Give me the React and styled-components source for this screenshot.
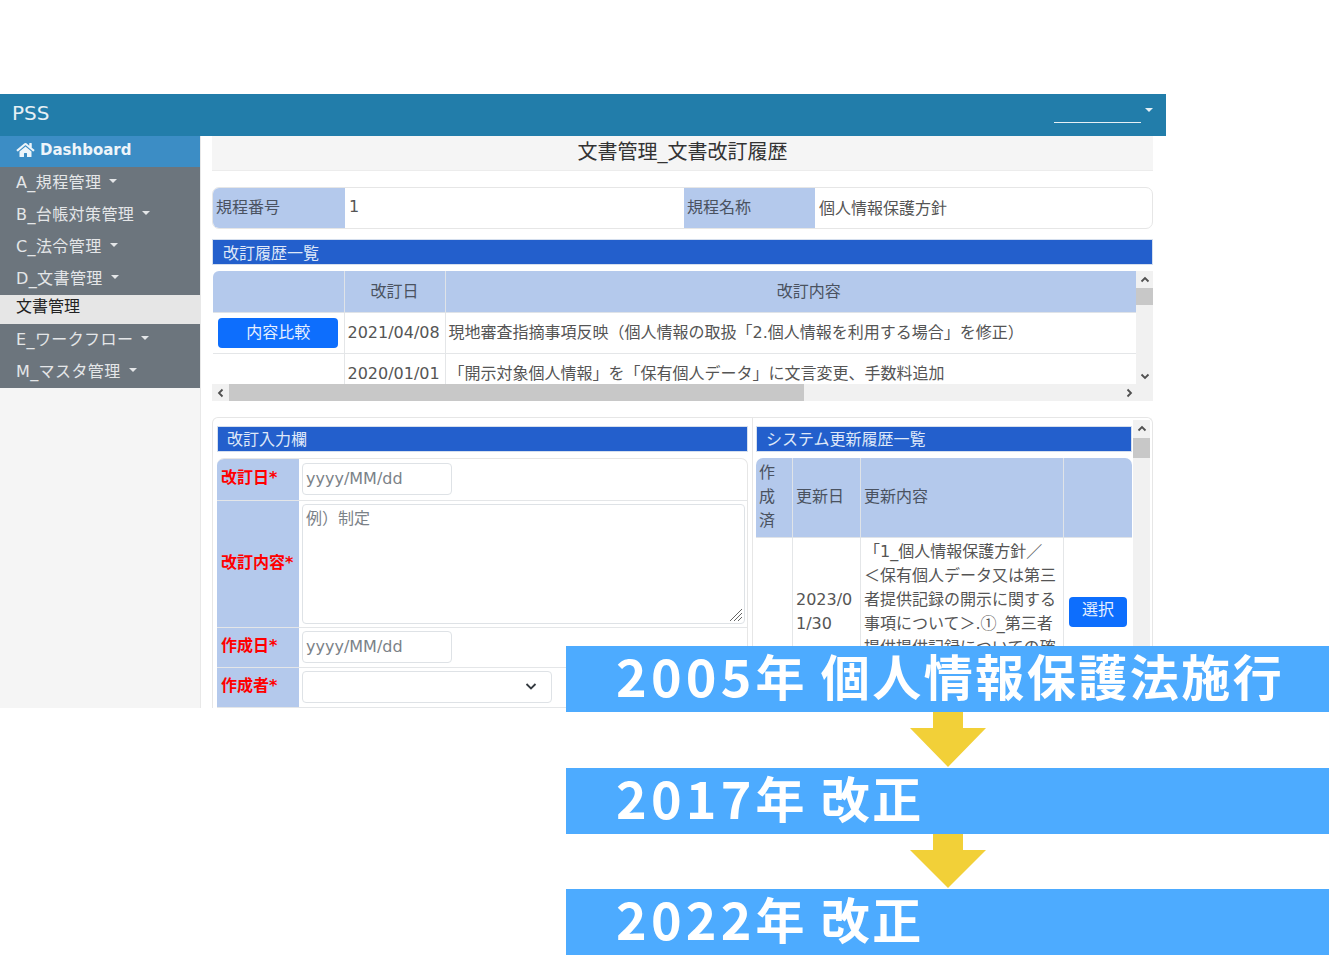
import React from "react";
import styled, { createGlobalStyle } from "styled-components";
import { FaHome } from "react-icons/fa";

const Global = createGlobalStyle`
  html, body { margin: 0; padding: 0; background: #fff; }
  body { font-family: "DejaVu Sans", "Noto Sans CJK JP", sans-serif; color: #555; font-size: 16px; }
  * { box-sizing: border-box; }
`;

const Slide = styled.div`
  position: relative;
  width: 1330px;
  height: 956px;
  padding-top: 94px;
  overflow: hidden;
  background: #fff;
`;
const AppWindow = styled.div`
  width: 1166px;
  height: 614px;
  overflow: hidden;
  display: flex;
  flex-direction: column;
`;
const Navbar = styled.header`
  flex: none;
  height: 42px;
  background: #227daa;
  display: flex;
  align-items: center;
  justify-content: space-between;
  padding: 0 13px 0 12px;
  color: #e6f0f5;
`;
const Brand = styled.span`
  font-size: 20px;
  padding-bottom: 4px;
`;
const UserMenu = styled.div`
  display: flex;
  align-items: flex-start;
  gap: 4px;
`;
const UserName = styled.span`
  width: 87px;
  height: 14px;
  margin-top: 1px;
  border-bottom: 1px solid #e6f0f5;
`;
const Caret = styled.i`
  display: inline-block;
  width: 0;
  height: 0;
  border-top: 4px solid currentColor;
  border-left: 4px solid transparent;
  border-right: 4px solid transparent;
`;
const Body = styled.div`
  flex: 1;
  display: flex;
  min-height: 0;
`;
const Sidebar = styled.nav`
  flex: none;
  width: 201px;
  background: #f5f5f5;
  border-right: 1px solid #e8e8e8;
`;
const DashItem = styled.div`
  height: 31px;
  background: #3c8dc5;
  color: #eef5fa;
  font-size: 15px;
  font-weight: 700;
  display: flex;
  align-items: center;
  gap: 5px;
  padding: 0 0 3px 16px;
  svg { width: 19px; height: 16px; }
`;
const NavItem = styled.div`
  height: 32px;
  background: #6c757d;
  color: #e4e6e8;
  display: flex;
  align-items: center;
  gap: 8px;
  padding: 0 0 4px 16px;
  letter-spacing: 0.4px;
`;
const NavSub = styled.div`
  height: 29px;
  background: #e6e6e6;
  color: #222;
  display: flex;
  align-items: center;
  padding: 0 0 9px 16px;
`;
const Main = styled.main`
  flex: none;
  width: 952px;
  margin-left: 11px;
  min-height: 0;
`;
const Title = styled.h1`
  margin: 0;
  height: 35px;
  background: #f5f5f5;
  border-bottom: 1px solid #ececec;
  font-size: 20px;
  font-weight: 400;
  line-height: 33px;
  color: #333;
  text-align: center;
  width: 941px;
`;
const Content = styled.div`
  width: 941px;
`;
const InfoGrid = styled.div`
  margin-top: 16px;
  height: 42px;
  display: grid;
  grid-template-columns: 132px 339px 131px 1fr;
  border: 1px solid #e6e6e6;
  border-radius: 7px;
  overflow: hidden;
`;
const InfoLabel = styled.div`
  background: #b4c9ec;
  display: flex;
  align-items: center;
  padding: 0 0 4px 3px;
  color: #4a5260;
`;
const InfoValue = styled.div`
  display: flex;
  align-items: center;
  padding: 0 0 3px 4px;
  color: #555;
`;
const SectionBar = styled.h2`
  margin: ${(p) => p.$mt || 0}px 0 0;
  height: 26px;
  background: #235fcc;
  border: 1px solid #d5dfee;
  color: #dfe8f8;
  font-size: 16px;
  font-weight: 400;
  line-height: ${(p) => p.$lh || 25}px;
  padding-left: ${(p) => p.$pl || 9}px;
`;
const TableFrame = styled.div`
  margin-top: 6px;
  display: grid;
  grid-template-columns: 924px 17px;
  grid-template-rows: 113px 17px;
`;
const TableClip = styled.div`
  overflow: hidden;
  height: 113px;
`;
const HistoryTable = styled.table`
  width: 959px;
  margin-left: 1px;
  table-layout: fixed;
  border-collapse: collapse;
`;
const HeadCell = styled.th`
  height: 41px;
  background: #b4c9ec;
  font-weight: 400;
  border: 1px solid #dfe3e8;
  border-top: 0;
  color: #4a5260;
  padding: 0 0 2px;
  &:first-child { border-left: 0; border-top-left-radius: 6px; }
  &:last-child { border-right: 0; }
`;
const Cell = styled.td`
  height: 41px;
  border: 1px solid #e4e6e8;
  padding: 0 3px ${(p) => p.$pb || 0}px;
  white-space: nowrap;
  color: #555;
  vertical-align: middle;
  &:first-child { border-left: 0; }
  &:last-child { border-right: 0; }
`;
const PrimaryButton = styled.button`
  height: ${(p) => p.$h}px;
  width: ${(p) => p.$w}px;
  background: #0d6efd;
  color: #e6f0ff;
  border: 0;
  border-radius: 4px;
  font: inherit;
  padding: 0 0 4px;
  display: block;
  margin: 0 auto;
`;
const VTrack = styled.div`
  background: #f1f1f1;
  width: 17px;
  display: flex;
  flex-direction: column;
  height: ${(p) => (p.$fill ? "300px" : "auto")};
`;
const HTrack = styled.div`
  grid-column: 1 / span 2;
  background: #f1f1f1;
  display: flex;
`;
const ArrowBox = styled.div`
  flex: none;
  width: ${(p) => p.$w}px;
  height: ${(p) => p.$h}px;
  display: flex;
  align-items: center;
  justify-content: center;
  color: #505050;
`;
const VThumb = styled.div`
  flex: none;
  height: ${(p) => p.$h}px;
  background: #c8c8c8;
`;
const HThumb = styled.div`
  flex: none;
  width: ${(p) => p.$w}px;
  background: #c8c8c8;
`;
const Spacer = styled.div`
  flex: 1;
`;
const Chevron = ({ dir }) => {
  const d = {
    up: "M1.5 6.5 5 3l3.5 3.5",
    down: "M1.5 3.5 5 7l3.5-3.5",
    left: "M6.5 1.5 3 5l3.5 3.5",
    right: "M3.5 1.5 7 5 3.5 8.5",
  }[dir];
  return (
    <svg width="10" height="10" viewBox="0 0 10 10">
      <path d={d} fill="none" stroke="currentColor" strokeWidth="1.8" />
    </svg>
  );
};
const LowerPanel = styled.section`
  margin-top: 16px;
  height: 300px;
  border: 1px solid #e6e6e6;
  border-bottom: 0;
  border-radius: 6px 6px 0 0;
  display: flex;
`;
const LeftCol = styled.div`
  flex: none;
  width: 540px;
  padding: 8px 4px 0 4px;
  border-right: 1px solid #e6e6e6;
`;
const RightCol = styled.div`
  flex: none;
  width: 396px;
  padding: 2px 0 0 3px;
  display: flex;
  gap: 1px;
  align-items: flex-start;
`;
const RightInner = styled.div`
  width: 376px;
  flex: none;
  padding-top: 6px;
`;
const Form = styled.div`
  margin-top: 6px;
  border: 1px solid #e6e6e6;
  border-width: 1px 1px 0 0;
  border-radius: 7px 7px 0 0;
  overflow: hidden;
`;
const FormRow = styled.div`
  display: grid;
  grid-template-columns: 82px 1fr;
  height: ${(p) => p.$h}px;
  border-bottom: 1px solid #e4e6e8;
`;
const FormLabel = styled.label`
  background: #b4c9ec;
  color: #f00;
  font-weight: 700;
  display: flex;
  align-items: center;
  padding: 0 0 7px 4px;
  white-space: nowrap;
`;
const FormField = styled.div`
  padding: ${(p) => p.$pt || 4}px 3px 0;
`;
const DateInput = styled.input`
  width: 150px;
  height: 32px;
  border: 1px solid #dee2e6;
  border-radius: 4px;
  padding: 0 3px 2px;
  font: inherit;
  color: #555;
  background: #fff;
  &::placeholder { color: #7b8288; opacity: 1; }
`;
const TextAreaWrap = styled.div`
  position: relative;
  width: 443px;
  height: 120px;
`;
const TextArea = styled.textarea`
  display: block;
  width: 100%;
  height: 100%;
  border: 1px solid #dee2e6;
  border-radius: 4px;
  padding: 0 3px;
  font: inherit;
  resize: none;
  &::placeholder { color: #7b8288; opacity: 1; }
`;
const ResizeGrip = styled.svg`
  position: absolute;
  right: 2px;
  bottom: 2px;
  pointer-events: none;
`;
const SelectWrap = styled.div`
  position: relative;
  width: 250px;
  height: 32px;
`;
const Select = styled.select`
  appearance: none;
  width: 100%;
  height: 100%;
  border: 1px solid #dee2e6;
  border-radius: 4px;
  background: #fff;
  font: inherit;
`;
const SelectIcon = styled.svg`
  position: absolute;
  right: 15px;
  top: 11px;
  pointer-events: none;
`;
const UpdateTable = styled.table`
  margin-top: 6px;
  width: 376px;
  table-layout: fixed;
  border-collapse: separate;
  border-spacing: 0;
`;
const UHead = styled.th`
  height: 80px;
  background: #b4c9ec;
  border-right: 1px solid #dfe3e8;
  border-bottom: 1px solid #dfe3e8;
  font-weight: 400;
  color: #4a5260;
  text-align: left;
  padding: 0 3px 2px;
  line-height: 24px;
  &:first-child { border-top-left-radius: 7px; }
  &:last-child { border-top-right-radius: 7px; border-right: 0; }
`;
const UCell = styled.td`
  border-right: 1px solid #e4e6e8;
  padding: 2px 3px 1px;
  line-height: 24px;
  color: #555;
  word-break: break-all;
  vertical-align: middle;
  &:last-child { border-right: 0; }
`;
const Circled = styled.span`
  font-family: "Noto Sans CJK JP", sans-serif;
  line-height: 1;
`;
const Overlay = styled.div`
  position: absolute;
  left: 566px;
  top: 646px;
  width: 763px;
  display: flex;
  flex-direction: column;
`;
const YearBar = styled.div`
  height: 66px;
  background: #4dabff;
  color: #fff;
  display: flex;
  align-items: center;
  padding: 0 0 10px 50px;
  font-family: "Noto Sans CJK JP", sans-serif;
  font-size: 49px;
  font-weight: 700;
  letter-spacing: 2.5px;
  white-space: pre;
`;
const Digits = styled.span`
  font-size: 52px;
  letter-spacing: 4.2px;
`;
const ArrowSvg = styled.svg`
  display: block;
  margin-left: 344px;
`;
const DownArrow = ({ h }) => (
  <ArrowSvg width="76" height={h} viewBox={`0 0 76 ${h}`}>
    <path d={`M23 0h30v16h23L38 ${h - 1} 0 16h23z`} fill="#f2d038" />
  </ArrowSvg>
);

export default function App() {
  return (
    <Slide>
      <Global />
      <AppWindow>
        <Navbar>
          <Brand>PSS</Brand>
          <UserMenu>
            <UserName />
            <Caret />
          </UserMenu>
        </Navbar>
        <Body>
          <Sidebar>
            <DashItem>
              <FaHome />
              Dashboard
            </DashItem>
            <NavItem>A_規程管理<Caret /></NavItem>
            <NavItem>B_台帳対策管理<Caret /></NavItem>
            <NavItem>C_法令管理<Caret /></NavItem>
            <NavItem>D_文書管理<Caret /></NavItem>
            <NavSub>文書管理</NavSub>
            <NavItem>E_ワークフロー<Caret /></NavItem>
            <NavItem>M_マスタ管理<Caret /></NavItem>
          </Sidebar>
          <Main>
            <Content>
              <Title>文書管理_文書改訂履歴</Title>
              <InfoGrid>
                <InfoLabel>規程番号</InfoLabel>
                <InfoValue>1</InfoValue>
                <InfoLabel>規程名称</InfoLabel>
                <InfoValue>個人情報保護方針</InfoValue>
              </InfoGrid>
              <SectionBar $mt={10} $lh={27} $pl={10}>改訂履歴一覧</SectionBar>
              <TableFrame>
                <TableClip>
                  <HistoryTable>
                    <colgroup>
                      <col width="131" />
                      <col width="101" />
                      <col />
                    </colgroup>
                    <thead>
                      <tr>
                        <HeadCell />
                        <HeadCell>改訂日</HeadCell>
                        <HeadCell>改訂内容</HeadCell>
                      </tr>
                    </thead>
                    <tbody>
                      <tr>
                        <Cell><PrimaryButton $w={120} $h={30}>内容比較</PrimaryButton></Cell>
                        <Cell>2021/04/08</Cell>
                        <Cell $pb={4}>現地審査指摘事項反映（個人情報の取扱「2.個人情報を利用する場合」を修正）</Cell>
                      </tr>
                      <tr>
                        <Cell />
                        <Cell>2020/01/01</Cell>
                        <Cell $pb={4}>「開示対象個人情報」を「保有個人データ」に文言変更、手数料追加</Cell>
                      </tr>
                    </tbody>
                  </HistoryTable>
                </TableClip>
                <VTrack>
                  <ArrowBox $w={17} $h={17}><Chevron dir="up" /></ArrowBox>
                  <VThumb $h={17} />
                  <Spacer />
                  <ArrowBox $w={17} $h={17}><Chevron dir="down" /></ArrowBox>
                </VTrack>
                <HTrack>
                  <ArrowBox $w={17} $h={17}><Chevron dir="left" /></ArrowBox>
                  <HThumb $w={575} />
                  <Spacer />
                  <ArrowBox $w={17} $h={17}><Chevron dir="right" /></ArrowBox>
                  <ArrowBox $w={16} $h={17} />
                </HTrack>
              </TableFrame>
              <LowerPanel>
                <LeftCol>
                  <SectionBar>改訂入力欄</SectionBar>
                  <Form>
                    <FormRow $h={42}>
                      <FormLabel>改訂日*</FormLabel>
                      <FormField><DateInput placeholder="yyyy/MM/dd" /></FormField>
                    </FormRow>
                    <FormRow $h={127}>
                      <FormLabel>改訂内容*</FormLabel>
                      <FormField $pt={3}>
                        <TextAreaWrap>
                          <TextArea placeholder="例）制定" />
                          <ResizeGrip width="14" height="14" viewBox="0 0 14 14">
                            <path d="M13 1 1 13M13 5 5 13M13 9l-4 4" stroke="#666" strokeWidth="1" fill="none" />
                          </ResizeGrip>
                        </TextAreaWrap>
                      </FormField>
                    </FormRow>
                    <FormRow $h={40}>
                      <FormLabel>作成日*</FormLabel>
                      <FormField $pt={3}><DateInput placeholder="yyyy/MM/dd" /></FormField>
                    </FormRow>
                    <FormRow $h={40}>
                      <FormLabel>作成者*</FormLabel>
                      <FormField $pt={3}>
                        <SelectWrap>
                          <Select />
                          <SelectIcon width="12" height="9" viewBox="0 0 12 9">
                            <path d="M1.5 2 6 6.5 10.5 2" fill="none" stroke="#343a40" strokeWidth="1.8" />
                          </SelectIcon>
                        </SelectWrap>
                      </FormField>
                    </FormRow>
                  </Form>
                </LeftCol>
                <RightCol>
                  <RightInner>
                    <SectionBar>システム更新履歴一覧</SectionBar>
                    <UpdateTable>
                      <colgroup>
                        <col width="37" />
                        <col width="68" />
                        <col width="203" />
                        <col />
                      </colgroup>
                      <thead>
                        <tr>
                          <UHead>作成済</UHead>
                          <UHead>更新日</UHead>
                          <UHead>更新内容</UHead>
                          <UHead />
                        </tr>
                      </thead>
                      <tbody>
                        <tr>
                          <UCell />
                          <UCell>2023/01/30</UCell>
                          <UCell>「1_個人情報保護方針／<br />＜保有個人データ又は第三者提供記録の開示に関する事項について＞.<Circled>①</Circled>_第三者提供提供記録についての確認記録</UCell>
                          <UCell><PrimaryButton $w={58} $h={30}>選択</PrimaryButton></UCell>
                        </tr>
                      </tbody>
                    </UpdateTable>
                  </RightInner>
                  <VTrack $fill>
                    <ArrowBox $w={17} $h={18}><Chevron dir="up" /></ArrowBox>
                    <VThumb $h={20} />
                  </VTrack>
                </RightCol>
              </LowerPanel>
            </Content>
          </Main>
        </Body>
      </AppWindow>
      <Overlay>
        <YearBar><Digits>2005</Digits>年 個人情報保護法施行</YearBar>
        <DownArrow h={56} />
        <YearBar><Digits>2017</Digits>年 改正</YearBar>
        <DownArrow h={55} />
        <YearBar><Digits>2022</Digits>年 改正</YearBar>
      </Overlay>
    </Slide>
  );
}
